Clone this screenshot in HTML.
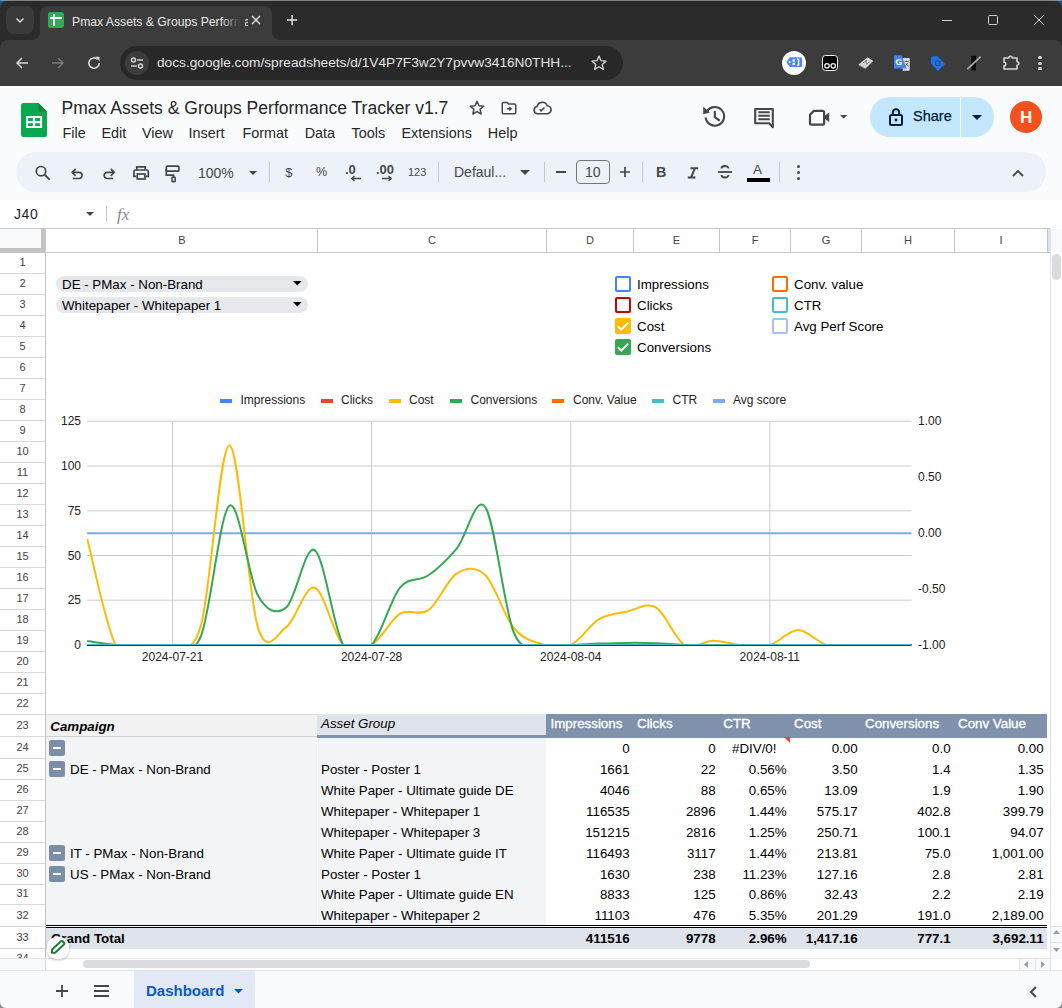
<!DOCTYPE html><html><head><meta charset="utf-8"><style>
*{margin:0;padding:0;box-sizing:border-box}
html,body{width:1062px;height:1008px;overflow:hidden;background:#f9fbfd;font-family:"Liberation Sans", sans-serif}
.abs{position:absolute}
.t{position:absolute;white-space:nowrap;line-height:1}
svg{position:absolute;overflow:visible}
</style></head><body>
<div class="abs" style="left:0;top:0;width:1062px;height:12px;background:#1c4f8a"></div>
<div class="abs" style="left:0;top:0;width:1062px;height:86px;background:#2b2b2b;border-radius:9px 9px 0 0"></div>
<div class="abs" style="left:0;top:0;width:1062px;height:1px;background:#bdbdbd;border-radius:9px 9px 0 0;opacity:.6"></div>
<div class="abs" style="left:6px;top:6px;width:28px;height:28px;background:#3a3a3a;border-radius:8px"></div>
<svg style="left:14px;top:14px" width="12" height="12" viewBox="0 0 12 12"><path d="M2.5 4.5 L6 8 L9.5 4.5" fill="none" stroke="#e3e3e3" stroke-width="1.4"/></svg>
<div class="abs" style="left:40px;top:6px;width:232px;height:40px;background:#3c3c3c;border-radius:8px 8px 0 0"></div>
<svg style="left:32px;top:32px" width="8" height="8"><path d="M0 8 A8 8 0 0 0 8 0 L8 8 Z" fill="#3c3c3c"/></svg>
<svg style="left:272px;top:32px" width="8" height="8"><path d="M0 0 A8 8 0 0 0 8 8 L0 8 Z" fill="#3c3c3c"/></svg>
<div class="abs" style="left:48px;top:12px;width:16px;height:16px;background:#34a853;border-radius:2px"></div>
<div class="abs" style="left:50px;top:17px;width:12px;height:2px;background:#fff"></div>
<div class="abs" style="left:53px;top:14px;width:2px;height:12px;background:#fff"></div>
<div class="t" style="left:72px;top:15.5px;font-size:12.2px;color:#e8e8e8;width:176px;overflow:hidden">Pmax Assets &amp; Groups Performance Tracker</div>
<div class="abs" style="left:221px;top:8px;width:24px;height:28px;background:linear-gradient(90deg,rgba(60,60,60,0),#3c3c3c 80%)"></div>
<svg style="left:251px;top:15px" width="10" height="10"><path d="M1 1L9 9M9 1L1 9" stroke="#e3e3e3" stroke-width="1.4"/></svg>
<svg style="left:287px;top:15px" width="10.5" height="10.5"><path d="M5.1 0V10.2M0 5.1H10.2" stroke="#e3e3e3" stroke-width="1.5"/></svg>
<div class="abs" style="left:942px;top:20px;width:10px;height:1px;background:#d0d0d0"></div>
<div class="abs" style="left:988px;top:15px;width:10px;height:10px;border:1px solid #d0d0d0;border-radius:1.5px"></div>
<svg style="left:1034px;top:15px" width="10" height="10"><path d="M0 0L10 10M10 0L0 10" stroke="#d0d0d0" stroke-width="1"/></svg>
<div class="abs" style="left:0;top:40px;width:1062px;height:46px;background:#3c3c3c;border-radius:8px 8px 0 0"></div>
<svg style="left:14px;top:55px" width="16" height="16"><path d="M14 8H3.2M8 3L3 8L8 13" fill="none" stroke="#d6d6d6" stroke-width="1.5"/></svg>
<svg style="left:50px;top:55px" width="16" height="16"><path d="M2 8H12.8M8 3L13 8L8 13" fill="none" stroke="#7a7a7a" stroke-width="1.5"/></svg>
<svg style="left:86px;top:55px" width="16" height="16"><path d="M13.2 8A5.2 5.2 0 1 1 11.5 4.2" fill="none" stroke="#d6d6d6" stroke-width="1.6"/><path d="M9 1.8L13.5 1.8L13.5 6.3Z" fill="#d6d6d6"/></svg>
<div class="abs" style="left:120px;top:46px;width:503px;height:34px;background:#282828;border-radius:17px"></div>
<div class="abs" style="left:125px;top:51px;width:24px;height:24px;background:#3c3c3c;border-radius:12px"></div>
<svg style="left:129px;top:55px" width="16" height="16"><circle cx="4.5" cy="5" r="2" fill="none" stroke="#d6d6d6" stroke-width="1.4"/><path d="M8 5H14" stroke="#d6d6d6" stroke-width="1.4"/><circle cx="11.5" cy="11" r="2" fill="none" stroke="#d6d6d6" stroke-width="1.4"/><path d="M2 11H8" stroke="#d6d6d6" stroke-width="1.4"/></svg>
<div class="t" style="left:157px;top:56px;font-size:13.7px;color:#e3e3e3">docs.google.com/spreadsheets/d/1V4P7F3w2Y7pvvw3416N0THH...</div>
<svg style="left:590px;top:54px" width="18" height="18" viewBox="0 0 24 24"><path d="M12 2.8l2.7 6.1 6.6.6-5 4.4 1.5 6.5L12 17l-5.8 3.4 1.5-6.5-5-4.4 6.6-.6z" fill="none" stroke="#d6d6d6" stroke-width="1.8" stroke-linejoin="round"/></svg>
<div class="abs" style="left:782px;top:51px;width:24px;height:24px;background:#fff;border-radius:12px"></div>
<svg style="left:0;top:0" width="1062" height="90"><path d="M786.3 62L789.8 57.2H800.5A1.5 1.5 0 0 1 802 58.7V65.5A1.5 1.5 0 0 1 800.5 67H789.8Z" fill="#4f86f7"/><circle cx="789.6" cy="62" r="1" fill="#fff"/><rect x="792.6" y="59.3" width="2.4" height="2.4" fill="#fff"/><rect x="792.6" y="62.8" width="2.4" height="2.4" fill="#fff"/><path d="M797 59.2H798.6V65.2H797" fill="none" stroke="#fff" stroke-width="1.3"/></svg>
<div class="abs" style="left:822px;top:55px;width:16px;height:16px;background:#000;border:1.5px solid #f2f2f2;border-radius:3.5px"></div>
<svg style="left:0;top:0" width="1062" height="90"><circle cx="827" cy="65.8" r="2.2" fill="none" stroke="#f2f2f2" stroke-width="1.3"/><circle cx="833.2" cy="65.8" r="2.2" fill="none" stroke="#f2f2f2" stroke-width="1.3"/></svg>
<svg style="left:0;top:0" width="1062" height="90"><path d="M858.5 64.5L867.5 57.3L873.3 61L865.5 68.4Z" fill="#d4d4d4"/><path d="M858.5 64.5L865.5 68.4L865.6 69.2L858.6 65.4Z" fill="#9a9a9a"/><path d="M863 62.8L867 60.2M865.8 64.6L869.5 61.8M866 60.5L866.3 64" stroke="#7a7a7a" stroke-width="0.9" fill="none"/></svg>
<svg style="left:0;top:0" width="1062" height="90"><path d="M902.6 57.9H908.8A1 1 0 0 1 909.8 58.9V69.7A1 1 0 0 1 908.8 70.7H902.6Z" fill="#dadada"/><path d="M894 55.3H901.5L906.5 68.4H894Z" fill="#4285f4"/><path d="M904.5 61.5H908.5M906.5 60.5V61.5M905 66.5L908 62.5M906 63.5L908.5 66.5" stroke="#5a5a5a" stroke-width="0.9" fill="none"/></svg>
<div class="t" style="left:895.5px;top:57.5px;font-size:8.5px;font-weight:bold;color:#fff">G</div>
<svg style="left:0;top:0" width="1062" height="90"><path d="M931 58.3A2 2 0 0 1 933 56.3H937.3L945 64L938 71L931 63.6Z" fill="#1a73e8"/><circle cx="937.8" cy="63.2" r="2.3" fill="#1a73e8" stroke="#2b4f80" stroke-width="1.2"/></svg>
<svg style="left:0;top:0" width="1062" height="90"><rect x="971.4" y="55.9" width="4.6" height="14.5" fill="#080808"/><path d="M967.4 69.1L980.6 56.6" stroke="#a8a8a8" stroke-width="1.8"/></svg>
<svg style="left:1001px;top:53px" width="20" height="20" viewBox="0 0 20 20"><path d="M3 5H7.7A1.8 1.8 0 0 1 11.3 5H16V8.7A1.8 1.8 0 0 1 16 12.3V16H3V12.8A1.8 1.8 0 0 0 3 9.2Z" fill="none" stroke="#d6d6d6" stroke-width="1.6" stroke-linejoin="round"/></svg>
<div class="abs" style="left:1038.4px;top:55.9px;width:3.2px;height:3.2px;background:#d6d6d6;border-radius:2px"></div>
<div class="abs" style="left:1038.4px;top:61.6px;width:3.2px;height:3.2px;background:#d6d6d6;border-radius:2px"></div>
<div class="abs" style="left:1038.4px;top:67.30000000000001px;width:3.2px;height:3.2px;background:#d6d6d6;border-radius:2px"></div>
<svg style="left:21px;top:103px" width="26" height="34" viewBox="0 0 26 34"><path d="M2.5 0H17.5L26 8.5V31.5A2.5 2.5 0 0 1 23.5 34H2.5A2.5 2.5 0 0 1 0 31.5V2.5A2.5 2.5 0 0 1 2.5 0Z" fill="#06a94d"/><path d="M17.5 0L26 8.5H17.5Z" fill="#16843a"/><path d="M5.1 13.1H21.1V25.1H5.1Z M7.1 15.1V18.1H11.9V15.1Z M14.1 15.1V18.1H19.1V15.1Z M7.1 20.2V22.9H11.9V20.2Z M14.1 20.2V22.9H19.1V20.2Z" fill="#fff" fill-rule="evenodd"/></svg>
<div class="t" style="left:61.5px;top:100px;font-size:17.55px;color:#262626">Pmax Assets &amp; Groups Performance Tracker v1.7</div>
<svg style="left:468px;top:99px" width="18" height="18" viewBox="0 0 24 24"><path d="M12 3.2l2.6 5.8 6.3.6-4.8 4.2 1.4 6.2L12 16.8l-5.5 3.2 1.4-6.2L3.1 9.6l6.3-.6z" fill="none" stroke="#444746" stroke-width="2" stroke-linejoin="round"/></svg>
<svg style="left:500px;top:99px" width="18" height="18" viewBox="0 0 24 24"><path d="M3 6A1.5 1.5 0 0 1 4.5 4.5H9.5L11.5 6.5H19.5A1.5 1.5 0 0 1 21 8V18A1.5 1.5 0 0 1 19.5 19.5H4.5A1.5 1.5 0 0 1 3 18Z" fill="none" stroke="#444746" stroke-width="2"/><path d="M9 13H15M12.5 10.5L15 13L12.5 15.5" fill="none" stroke="#444746" stroke-width="1.8"/></svg>
<svg style="left:532px;top:99px" width="20" height="18" viewBox="0 0 24 22"><path d="M6.5 18A4.5 4.5 0 0 1 6 9.1 6.5 6.5 0 0 1 18.4 8.2 4.9 4.9 0 0 1 18 18Z" fill="none" stroke="#444746" stroke-width="2"/><path d="M9 12.5L11 14.5L15 10.5" fill="none" stroke="#444746" stroke-width="1.8"/></svg>
<div class="t" style="left:62.5px;top:125.7px;font-size:14.4px;color:#262626">File</div>
<div class="t" style="left:101.5px;top:125.7px;font-size:14.4px;color:#262626">Edit</div>
<div class="t" style="left:142px;top:125.7px;font-size:14.4px;color:#262626">View</div>
<div class="t" style="left:188.5px;top:125.7px;font-size:14.4px;color:#262626">Insert</div>
<div class="t" style="left:242.5px;top:125.7px;font-size:14.4px;color:#262626">Format</div>
<div class="t" style="left:304.7px;top:125.7px;font-size:14.4px;color:#262626">Data</div>
<div class="t" style="left:351.5px;top:125.7px;font-size:14.4px;color:#262626">Tools</div>
<div class="t" style="left:401.5px;top:125.7px;font-size:14.4px;color:#262626">Extensions</div>
<div class="t" style="left:487.8px;top:125.7px;font-size:14.4px;color:#262626">Help</div>
<svg style="left:0;top:0" width="1062" height="200"><path d="M706.6 112A9.3 9.3 0 1 1 705.6 117.5" fill="none" stroke="#444746" stroke-width="2.1"/><path d="M703.2 106.8L710 112.6L703.2 114.2Z" fill="#444746"/><path d="M714.8 111V117.2L719.8 120.6" fill="none" stroke="#444746" stroke-width="2.1"/></svg>
<svg style="left:0;top:0" width="1062" height="200"><path d="M755.2 109H772.8V127.2L769 123.3H755.2Z" fill="none" stroke="#444746" stroke-width="2.1" stroke-linejoin="round"/><path d="M758.3 112.3H769.8M758.3 115.8H769.8M758.3 119.3H769.8" stroke="#444746" stroke-width="2"/></svg>
<svg style="left:0;top:0" width="1062" height="200"><path d="M813.8 110.9H822.8A1.3 1.3 0 0 1 824.1 112.2V123.4A1.3 1.3 0 0 1 822.8 124.7H811.3A1.3 1.3 0 0 1 810 123.4V114.7Z" fill="none" stroke="#444746" stroke-width="2.2" stroke-linejoin="round"/><path d="M824 116.3L829.2 112.6V122L824 118.3Z" fill="#444746"/></svg>
<svg style="left:839.6px;top:115px" width="8" height="4"><path d="M0 0H7.4L3.7 3.5Z" fill="#444746"/></svg>
<div class="abs" style="left:870px;top:97px;width:124px;height:40px;background:#c2e7ff;border-radius:20px"></div>
<div class="abs" style="left:960px;top:97px;width:1px;height:40px;background:#f9fbfd"></div>
<svg style="left:888px;top:107px" width="16" height="20" viewBox="0 0 16 20"><rect x="2" y="8" width="12" height="10" rx="1.5" fill="none" stroke="#001d35" stroke-width="2"/><path d="M4.8 8V5.5A3.2 3.2 0 0 1 11.2 5.5V8" fill="none" stroke="#001d35" stroke-width="2"/><circle cx="8" cy="13" r="1.4" fill="#001d35"/></svg>
<div class="t" style="left:913px;top:109px;font-size:14.5px;color:#001d35;-webkit-text-stroke:0.25px #001d35">Share</div>
<svg style="left:972px;top:115px" width="10" height="6"><path d="M0 0H10L5 5Z" fill="#001d35"/></svg>
<div class="abs" style="left:1010px;top:101px;width:32px;height:32px;background:#f4511e;border-radius:16px"></div>
<div class="t" style="left:1020px;top:109px;font-size:17px;color:#fff;font-weight:bold">H</div>
<div class="abs" style="left:16px;top:152px;width:1030px;height:40px;background:#edf2fa;border-radius:20px"></div>
<svg style="left:0;top:0" width="300" height="200"><circle cx="41" cy="171.2" r="4.7" fill="none" stroke="#444746" stroke-width="1.7"/><path d="M44.6 174.8L49.6 179.6" stroke="#444746" stroke-width="2"/></svg>
<svg style="left:0;top:0" width="300" height="200"><path d="M73 172.3H79A3.1 3.1 0 0 1 79 178.5H73" fill="none" stroke="#444746" stroke-width="1.7"/><path d="M75.6 168.8L72.2 172.3L75.6 175.8" fill="none" stroke="#444746" stroke-width="1.7"/></svg>
<svg style="left:0;top:0" width="300" height="200"><path d="M114 172.3H107.3A3.1 3.1 0 0 0 107.3 178.5H113" fill="none" stroke="#444746" stroke-width="1.7"/><path d="M110.8 168.8L114.2 172.3L110.8 175.8" fill="none" stroke="#444746" stroke-width="1.7"/></svg>
<svg style="left:0;top:0" width="300" height="200"><path d="M136.8 170V166.8H145.2V170" fill="none" stroke="#444746" stroke-width="1.7"/><path d="M136.3 176.3H134V171.5A1.5 1.5 0 0 1 135.5 170H146.8A1.5 1.5 0 0 1 148.3 171.5V176.3H146" fill="none" stroke="#444746" stroke-width="1.7"/><rect x="137.3" y="174" width="7.6" height="5" fill="none" stroke="#444746" stroke-width="1.7"/></svg>
<svg style="left:0;top:0" width="300" height="200"><rect x="166.3" y="166.2" width="12.6" height="5" rx="1" fill="none" stroke="#444746" stroke-width="1.7"/><path d="M166.3 169V175.2H173.5V177.5" fill="none" stroke="#444746" stroke-width="1.7"/><rect x="172" y="177.3" width="3.2" height="4.3" rx=".6" fill="none" stroke="#444746" stroke-width="1.6"/></svg>
<div class="t" style="left:198px;top:166px;font-size:14px;color:#444746">100%</div>
<svg style="left:248.5px;top:170.5px" width="8" height="5"><path d="M0 0H8L4 4Z" fill="#444746"/></svg>
<div class="abs" style="left:269px;top:162px;width:1px;height:20px;background:#c7c7c7"></div>
<div class="abs" style="left:438px;top:162px;width:1px;height:20px;background:#c7c7c7"></div>
<div class="abs" style="left:544px;top:162px;width:1px;height:20px;background:#c7c7c7"></div>
<div class="abs" style="left:642px;top:162px;width:1px;height:20px;background:#c7c7c7"></div>
<div class="abs" style="left:779px;top:162px;width:1px;height:20px;background:#c7c7c7"></div>
<div class="t" style="left:285.3px;top:165.5px;font-size:13px;color:#444746">$</div>
<div class="t" style="left:316px;top:166px;font-size:12.5px;color:#444746">%</div>
<div class="t" style="left:345px;top:163px;font-size:13px;color:#444746;font-weight:bold">.0</div>
<svg style="left:350px;top:175px" width="12" height="7"><path d="M11 3.5H2M4.5 1L1.8 3.5L4.5 6" fill="none" stroke="#444746" stroke-width="1.4"/></svg>
<div class="t" style="left:376px;top:163px;font-size:13px;color:#444746;font-weight:bold">.00</div>
<svg style="left:381px;top:175px" width="12" height="7"><path d="M1 3.5H10M7.5 1L10.2 3.5L7.5 6" fill="none" stroke="#444746" stroke-width="1.4"/></svg>
<div class="t" style="left:408px;top:167px;font-size:11px;color:#444746">123</div>
<div class="t" style="left:454px;top:165px;font-size:14px;color:#444746">Defaul...</div>
<svg style="left:520px;top:170px" width="10" height="5"><path d="M0 0H10L5 5Z" fill="#444746"/></svg>
<div class="abs" style="left:556px;top:171.2px;width:10px;height:1.7px;background:#444746"></div>
<div class="abs" style="left:576px;top:160px;width:34px;height:24px;border:1px solid #747775;border-radius:4px"></div>
<div class="t" style="left:585px;top:165px;font-size:14px;color:#444746">10</div>
<svg style="left:620px;top:167px" width="10" height="10"><path d="M5 0V10M0 5H10" stroke="#444746" stroke-width="1.7"/></svg>
<div class="t" style="left:656px;top:165px;font-size:14.3px;color:#444746;font-weight:bold">B</div>
<svg style="left:0;top:0" width="800" height="200"><path d="M690.5 168.2H698.2M687.8 177.5H695.5M695 168.2L691 177.5" fill="none" stroke="#444746" stroke-width="1.9"/></svg>
<svg style="left:716px;top:163px" width="18" height="18" viewBox="0 0 18 18"><path d="M2 9H16" stroke="#444746" stroke-width="1.8"/><path d="M12.5 5.5A3.5 2.5 0 0 0 5.5 5.5M5.5 12A3.5 2.5 0 0 0 12.5 12" fill="none" stroke="#444746" stroke-width="1.8"/></svg>
<div class="t" style="left:753px;top:163px;font-size:13.5px;color:#444746">A</div>
<div class="abs" style="left:747px;top:178px;width:23px;height:4px;background:#000"></div>
<div class="abs" style="left:797px;top:165px;width:3px;height:3px;background:#444746;border-radius:2px"></div>
<div class="abs" style="left:797px;top:171px;width:3px;height:3px;background:#444746;border-radius:2px"></div>
<div class="abs" style="left:797px;top:177px;width:3px;height:3px;background:#444746;border-radius:2px"></div>
<svg style="left:1012px;top:169px" width="12" height="8"><path d="M1 7L6 2L11 7" fill="none" stroke="#444746" stroke-width="1.8"/></svg>
<div class="abs" style="left:0;top:200px;width:1062px;height:28px;background:#fff"></div>
<div class="t" style="left:14px;top:206.6px;font-size:14px;letter-spacing:.6px;color:#1f1f1f">J40</div>
<svg style="left:86px;top:212px" width="8" height="4"><path d="M0 0H8L4 4Z" fill="#444746"/></svg>
<div class="abs" style="left:106px;top:206px;width:1px;height:16px;background:#c7c7c7"></div>
<div class="t" style="left:117px;top:205.5px;font-size:17px;color:#8a8a8a;font-style:italic;font-family:'Liberation Serif',serif">fx</div>
<div class="abs" style="left:0;top:228px;width:1062px;height:731px;background:#fff"></div>
<div class="abs" style="left:0;top:228px;width:1050px;height:1px;background:#c4c7c5"></div>
<div class="abs" style="left:0;top:229px;width:41px;height:19px;background:#f8f9fa"></div>
<div class="abs" style="left:41px;top:229px;width:5px;height:24px;background:#c4c4c4"></div>
<div class="abs" style="left:0;top:248px;width:46px;height:5px;background:#c4c4c4"></div>
<div class="abs" style="left:46px;top:252px;width:1004px;height:1px;background:#c4c7c5"></div>
<div class="abs" style="left:317px;top:229px;width:1px;height:23px;background:#c4c7c5"></div>
<div class="t" style="left:46px;width:271px;text-align:center;top:235px;font-size:11px;color:#444;padding-left:1px">B</div>
<div class="abs" style="left:546px;top:229px;width:1px;height:23px;background:#c4c7c5"></div>
<div class="t" style="left:317px;width:229px;text-align:center;top:235px;font-size:11px;color:#444;padding-left:1px">C</div>
<div class="abs" style="left:633px;top:229px;width:1px;height:23px;background:#c4c7c5"></div>
<div class="t" style="left:546px;width:87px;text-align:center;top:235px;font-size:11px;color:#444;padding-left:1px">D</div>
<div class="abs" style="left:719px;top:229px;width:1px;height:23px;background:#c4c7c5"></div>
<div class="t" style="left:633px;width:86px;text-align:center;top:235px;font-size:11px;color:#444;padding-left:1px">E</div>
<div class="abs" style="left:790px;top:229px;width:1px;height:23px;background:#c4c7c5"></div>
<div class="t" style="left:719px;width:71px;text-align:center;top:235px;font-size:11px;color:#444;padding-left:1px">F</div>
<div class="abs" style="left:861px;top:229px;width:1px;height:23px;background:#c4c7c5"></div>
<div class="t" style="left:790px;width:71px;text-align:center;top:235px;font-size:11px;color:#444;padding-left:1px">G</div>
<div class="abs" style="left:954px;top:229px;width:1px;height:23px;background:#c4c7c5"></div>
<div class="t" style="left:861px;width:93px;text-align:center;top:235px;font-size:11px;color:#444;padding-left:1px">H</div>
<div class="abs" style="left:1047px;top:229px;width:1px;height:23px;background:#c4c7c5"></div>
<div class="t" style="left:954px;width:93px;text-align:center;top:235px;font-size:11px;color:#444;padding-left:1px">I</div>
<div class="abs" style="left:1048px;top:229px;width:2px;height:23px;background:#d3e3fd"></div>
<div class="abs" style="left:1050px;top:229px;width:12px;height:730px;background:#fff;border-left:1px solid #e3e3e3"></div>
<div class="abs" style="left:1051px;top:229px;width:11px;height:23px;background:#f8f9fa"></div>
<div class="abs" style="left:1052px;top:254px;width:9px;height:26px;background:#dadce0;border-radius:5px"></div>
<div class="abs" style="left:45px;top:253px;width:1px;height:706px;background:#c4c4c4"></div>
<div class="abs" style="left:0;top:273px;width:45px;height:1px;background:#d9d9d9"></div>
<div class="t" style="left:0;width:45px;text-align:center;top:257px;font-size:11px;color:#444">1</div>
<div class="abs" style="left:0;top:294px;width:45px;height:1px;background:#d9d9d9"></div>
<div class="t" style="left:0;width:45px;text-align:center;top:278px;font-size:11px;color:#444">2</div>
<div class="abs" style="left:0;top:315px;width:45px;height:1px;background:#d9d9d9"></div>
<div class="t" style="left:0;width:45px;text-align:center;top:299px;font-size:11px;color:#444">3</div>
<div class="abs" style="left:0;top:336px;width:45px;height:1px;background:#d9d9d9"></div>
<div class="t" style="left:0;width:45px;text-align:center;top:320px;font-size:11px;color:#444">4</div>
<div class="abs" style="left:0;top:357px;width:45px;height:1px;background:#d9d9d9"></div>
<div class="t" style="left:0;width:45px;text-align:center;top:341px;font-size:11px;color:#444">5</div>
<div class="abs" style="left:0;top:378px;width:45px;height:1px;background:#d9d9d9"></div>
<div class="t" style="left:0;width:45px;text-align:center;top:362px;font-size:11px;color:#444">6</div>
<div class="abs" style="left:0;top:399px;width:45px;height:1px;background:#d9d9d9"></div>
<div class="t" style="left:0;width:45px;text-align:center;top:383px;font-size:11px;color:#444">7</div>
<div class="abs" style="left:0;top:420px;width:45px;height:1px;background:#d9d9d9"></div>
<div class="t" style="left:0;width:45px;text-align:center;top:404px;font-size:11px;color:#444">8</div>
<div class="abs" style="left:0;top:441px;width:45px;height:1px;background:#d9d9d9"></div>
<div class="t" style="left:0;width:45px;text-align:center;top:425px;font-size:11px;color:#444">9</div>
<div class="abs" style="left:0;top:462px;width:45px;height:1px;background:#d9d9d9"></div>
<div class="t" style="left:0;width:45px;text-align:center;top:446px;font-size:11px;color:#444">10</div>
<div class="abs" style="left:0;top:483px;width:45px;height:1px;background:#d9d9d9"></div>
<div class="t" style="left:0;width:45px;text-align:center;top:467px;font-size:11px;color:#444">11</div>
<div class="abs" style="left:0;top:504px;width:45px;height:1px;background:#d9d9d9"></div>
<div class="t" style="left:0;width:45px;text-align:center;top:488px;font-size:11px;color:#444">12</div>
<div class="abs" style="left:0;top:525px;width:45px;height:1px;background:#d9d9d9"></div>
<div class="t" style="left:0;width:45px;text-align:center;top:509px;font-size:11px;color:#444">13</div>
<div class="abs" style="left:0;top:546px;width:45px;height:1px;background:#d9d9d9"></div>
<div class="t" style="left:0;width:45px;text-align:center;top:530px;font-size:11px;color:#444">14</div>
<div class="abs" style="left:0;top:567px;width:45px;height:1px;background:#d9d9d9"></div>
<div class="t" style="left:0;width:45px;text-align:center;top:551px;font-size:11px;color:#444">15</div>
<div class="abs" style="left:0;top:588px;width:45px;height:1px;background:#d9d9d9"></div>
<div class="t" style="left:0;width:45px;text-align:center;top:572px;font-size:11px;color:#444">16</div>
<div class="abs" style="left:0;top:609px;width:45px;height:1px;background:#d9d9d9"></div>
<div class="t" style="left:0;width:45px;text-align:center;top:593px;font-size:11px;color:#444">17</div>
<div class="abs" style="left:0;top:630px;width:45px;height:1px;background:#d9d9d9"></div>
<div class="t" style="left:0;width:45px;text-align:center;top:614px;font-size:11px;color:#444">18</div>
<div class="abs" style="left:0;top:651px;width:45px;height:1px;background:#d9d9d9"></div>
<div class="t" style="left:0;width:45px;text-align:center;top:635px;font-size:11px;color:#444">19</div>
<div class="abs" style="left:0;top:672px;width:45px;height:1px;background:#d9d9d9"></div>
<div class="t" style="left:0;width:45px;text-align:center;top:656px;font-size:11px;color:#444">20</div>
<div class="abs" style="left:0;top:693px;width:45px;height:1px;background:#d9d9d9"></div>
<div class="t" style="left:0;width:45px;text-align:center;top:677px;font-size:11px;color:#444">21</div>
<div class="abs" style="left:0;top:714px;width:45px;height:1px;background:#d9d9d9"></div>
<div class="t" style="left:0;width:45px;text-align:center;top:698px;font-size:11px;color:#444">22</div>
<div class="abs" style="left:0;top:736px;width:45px;height:1px;background:#d9d9d9"></div>
<div class="t" style="left:0;width:45px;text-align:center;top:720px;font-size:11px;color:#444">23</div>
<div class="abs" style="left:0;top:758px;width:45px;height:1px;background:#d9d9d9"></div>
<div class="t" style="left:0;width:45px;text-align:center;top:742px;font-size:11px;color:#444">24</div>
<div class="abs" style="left:0;top:779px;width:45px;height:1px;background:#d9d9d9"></div>
<div class="t" style="left:0;width:45px;text-align:center;top:763px;font-size:11px;color:#444">25</div>
<div class="abs" style="left:0;top:800px;width:45px;height:1px;background:#d9d9d9"></div>
<div class="t" style="left:0;width:45px;text-align:center;top:784px;font-size:11px;color:#444">26</div>
<div class="abs" style="left:0;top:821px;width:45px;height:1px;background:#d9d9d9"></div>
<div class="t" style="left:0;width:45px;text-align:center;top:805px;font-size:11px;color:#444">27</div>
<div class="abs" style="left:0;top:842px;width:45px;height:1px;background:#d9d9d9"></div>
<div class="t" style="left:0;width:45px;text-align:center;top:826px;font-size:11px;color:#444">28</div>
<div class="abs" style="left:0;top:863px;width:45px;height:1px;background:#d9d9d9"></div>
<div class="t" style="left:0;width:45px;text-align:center;top:847px;font-size:11px;color:#444">29</div>
<div class="abs" style="left:0;top:884px;width:45px;height:1px;background:#d9d9d9"></div>
<div class="t" style="left:0;width:45px;text-align:center;top:868px;font-size:11px;color:#444">30</div>
<div class="abs" style="left:0;top:904px;width:45px;height:1px;background:#d9d9d9"></div>
<div class="t" style="left:0;width:45px;text-align:center;top:888px;font-size:11px;color:#444">31</div>
<div class="abs" style="left:0;top:926px;width:45px;height:1px;background:#d9d9d9"></div>
<div class="t" style="left:0;width:45px;text-align:center;top:910px;font-size:11px;color:#444">32</div>
<div class="abs" style="left:0;top:948px;width:45px;height:1px;background:#d9d9d9"></div>
<div class="t" style="left:0;width:45px;text-align:center;top:932px;font-size:11px;color:#444">33</div>
<div class="abs" style="left:0;top:969px;width:45px;height:1px;background:#d9d9d9"></div>
<div class="t" style="left:0;width:45px;text-align:center;top:953px;font-size:11px;color:#444">34</div>
<div class="abs" style="left:56px;top:276px;width:252px;height:16px;background:#e6e8ec;border-radius:8px"></div>
<div class="t" style="left:62px;top:278px;font-size:13.33px;color:#000">DE - PMax - Non-Brand</div>
<svg style="left:293.1px;top:281.2px" width="9" height="5"><path d="M0 0H8.7L4.35 4.5Z" fill="#000"/></svg>
<div class="abs" style="left:56px;top:297px;width:252px;height:16px;background:#e6e8ec;border-radius:8px"></div>
<div class="t" style="left:62px;top:299px;font-size:13.33px;color:#000">Whitepaper - Whitepaper 1</div>
<svg style="left:293.1px;top:302.2px" width="9" height="5"><path d="M0 0H8.7L4.35 4.5Z" fill="#000"/></svg>
<div class="abs" style="left:615px;top:276px;width:16px;height:16px;border:2px solid #4285f4;border-radius:2px"></div>
<div class="t" style="left:637px;top:278px;font-size:13.33px;color:#000">Impressions</div>
<div class="abs" style="left:615px;top:297px;width:16px;height:16px;border:2px solid #cc0000;border-radius:2px"></div>
<div class="t" style="left:637px;top:299px;font-size:13.33px;color:#000">Clicks</div>
<div class="abs" style="left:615px;top:318px;width:16px;height:16px;background:#fbbc04;border-radius:2px"></div>
<svg style="left:615px;top:318px" width="16" height="16"><path d="M2.8 8.3L6.2 11.6L13.2 4.6" fill="none" stroke="#fff" stroke-width="2"/></svg>
<div class="t" style="left:637px;top:320px;font-size:13.33px;color:#000">Cost</div>
<div class="abs" style="left:615px;top:339px;width:16px;height:16px;background:#34a853;border-radius:2px"></div>
<svg style="left:615px;top:339px" width="16" height="16"><path d="M2.8 8.3L6.2 11.6L13.2 4.6" fill="none" stroke="#fff" stroke-width="2"/></svg>
<div class="t" style="left:637px;top:341px;font-size:13.33px;color:#000">Conversions</div>
<div class="abs" style="left:772px;top:276px;width:16px;height:16px;border:2px solid #ff6d01;border-radius:2px"></div>
<div class="t" style="left:794px;top:278px;font-size:13.33px;color:#000">Conv. value</div>
<div class="abs" style="left:772px;top:297px;width:16px;height:16px;border:2px solid #46bdc6;border-radius:2px"></div>
<div class="t" style="left:794px;top:299px;font-size:13.33px;color:#000">CTR</div>
<div class="abs" style="left:772px;top:318px;width:16px;height:16px;border:2px solid #a4c2f4;border-radius:2px"></div>
<div class="t" style="left:794px;top:320px;font-size:13.33px;color:#000">Avg Perf Score</div>
<div class="abs" style="left:220px;top:399px;width:12px;height:4px;background:#4285f4"></div>
<div class="t" style="left:240.5px;top:394px;font-size:12px;color:#222">Impressions</div>
<div class="abs" style="left:321px;top:399px;width:12px;height:4px;background:#ea4335"></div>
<div class="t" style="left:341px;top:394px;font-size:12px;color:#222">Clicks</div>
<div class="abs" style="left:389px;top:399px;width:12px;height:4px;background:#fbbc04"></div>
<div class="t" style="left:409px;top:394px;font-size:12px;color:#222">Cost</div>
<div class="abs" style="left:450px;top:399px;width:12px;height:4px;background:#34a853"></div>
<div class="t" style="left:470.5px;top:394px;font-size:12px;color:#222">Conversions</div>
<div class="abs" style="left:552px;top:399px;width:12px;height:4px;background:#ff6d01"></div>
<div class="t" style="left:573px;top:394px;font-size:12px;color:#222">Conv. Value</div>
<div class="abs" style="left:652px;top:399px;width:12px;height:4px;background:#46bdc6"></div>
<div class="t" style="left:672.5px;top:394px;font-size:12px;color:#222">CTR</div>
<div class="abs" style="left:713px;top:399px;width:12px;height:4px;background:#7baaf7"></div>
<div class="t" style="left:733px;top:394px;font-size:12px;color:#222">Avg score</div>
<svg style="left:0;top:0" width="1062" height="1008"><defs><clipPath id="pc"><rect x="87" y="380" width="825" height="265"/></clipPath></defs><path d="M87 645.0H911.5" stroke="#cccccc" stroke-width="1"/><path d="M87 600.2H911.5" stroke="#cccccc" stroke-width="1"/><path d="M87 555.5H911.5" stroke="#cccccc" stroke-width="1"/><path d="M87 510.8H911.5" stroke="#cccccc" stroke-width="1"/><path d="M87 466.0H911.5" stroke="#cccccc" stroke-width="1"/><path d="M87 421.2H911.5" stroke="#cccccc" stroke-width="1"/><path d="M172.5 421.3V645" stroke="#cccccc" stroke-width="1"/><path d="M371.6 421.3V645" stroke="#cccccc" stroke-width="1"/><path d="M570.7 421.3V645" stroke="#cccccc" stroke-width="1"/><path d="M769.8 421.3V645" stroke="#cccccc" stroke-width="1"/><path d="M87 533.3H911.5" stroke="#7baaf7" stroke-width="2"/><path clip-path="url(#pc)" d="M87.2 538.7 C91.9 556.4 106.2 627.3 115.6 645.0 C125.1 662.7 134.6 645.0 144.1 645.0 C153.6 645.0 163.0 648.3 172.5 645.0 C182.0 641.7 191.5 658.6 201.0 625.3 C210.4 592.0 219.9 444.9 229.4 445.2 C238.9 445.5 248.4 596.8 257.8 627.1 C267.3 657.4 276.8 633.7 286.3 627.1 C295.8 620.5 305.2 584.7 314.7 587.7 C324.2 590.7 333.7 635.5 343.2 645.0 C352.6 654.5 362.1 650.2 371.6 645.0 C381.1 639.8 390.6 619.5 400.0 613.7 C409.5 607.9 419.0 616.8 428.5 610.1 C438.0 603.4 447.4 579.2 456.9 573.4 C466.4 567.6 475.9 566.1 485.4 575.2 C494.8 584.3 504.3 616.5 513.8 628.0 C523.3 639.5 532.8 641.3 542.2 644.1 C551.7 646.9 561.2 649.1 570.7 645.0 C580.2 640.9 589.6 624.8 599.1 619.2 C608.6 613.6 618.1 613.5 627.6 611.5 C637.0 609.6 646.5 601.8 656.0 607.4 C665.5 613.0 675.0 639.5 684.4 645.0 C693.9 650.5 703.4 640.7 712.9 640.7 C722.4 640.7 731.8 644.3 741.3 645.0 C750.8 645.7 760.3 647.5 769.8 645.0 C779.2 642.5 788.7 630.1 798.2 630.1 C807.7 630.1 817.2 642.5 826.6 645.0 C836.1 647.5 845.6 645.0 855.1 645.0 C864.6 645.0 874.0 645.0 883.5 645.0 C893.0 645.0 907.2 645.0 912.0 645.0" fill="none" stroke="#fbbc04" stroke-width="2"/><path clip-path="url(#pc)" d="M87.2 641.1 C91.9 641.7 106.2 644.3 115.6 645.0 C125.1 645.7 134.6 645.0 144.1 645.0 C153.6 645.0 163.0 646.5 172.5 645.0 C182.0 643.5 191.5 659.3 201.0 636.0 C210.4 612.8 219.9 512.5 229.4 505.7 C238.9 498.9 248.4 578.3 257.8 595.2 C267.3 612.2 276.8 614.9 286.3 607.4 C295.8 599.9 305.2 543.9 314.7 550.1 C324.2 556.4 333.7 629.2 343.2 645.0 C352.6 660.8 362.1 654.5 371.6 645.0 C381.1 635.5 390.6 599.4 400.0 587.7 C409.5 576.1 419.0 581.8 428.5 575.2 C438.0 568.6 447.4 559.7 456.9 548.3 C466.4 537.0 475.9 493.1 485.4 507.2 C494.8 521.2 504.3 609.5 513.8 632.5 C523.3 655.4 532.8 642.9 542.2 645.0 C551.7 647.1 561.2 645.2 570.7 645.0 C580.2 644.8 589.6 643.9 599.1 643.6 C608.6 643.2 618.1 642.9 627.6 642.9 C637.0 642.8 646.5 642.9 656.0 643.2 C665.5 643.6 675.0 644.7 684.4 645.0 C693.9 645.3 703.4 645.0 712.9 645.0 C722.4 645.0 731.8 645.0 741.3 645.0 C750.8 645.0 760.3 645.0 769.8 645.0 C779.2 645.0 788.7 645.0 798.2 645.0 C807.7 645.0 817.2 645.0 826.6 645.0 C836.1 645.0 845.6 645.0 855.1 645.0 C864.6 645.0 874.0 645.0 883.5 645.0 C893.0 645.0 907.2 645.0 912.0 645.0" fill="none" stroke="#34a853" stroke-width="2"/><path d="M87 644.5H911.5" stroke="#46bdc6" stroke-width="1"/><path d="M87 645.5H911.5" stroke="#333" stroke-width="1.2"/></svg>
<div class="t" style="left:31px;width:50px;text-align:right;top:639.0px;font-size:12px;color:#222">0</div>
<div class="t" style="left:31px;width:50px;text-align:right;top:594.2px;font-size:12px;color:#222">25</div>
<div class="t" style="left:31px;width:50px;text-align:right;top:549.5px;font-size:12px;color:#222">50</div>
<div class="t" style="left:31px;width:50px;text-align:right;top:504.8px;font-size:12px;color:#222">75</div>
<div class="t" style="left:31px;width:50px;text-align:right;top:460.0px;font-size:12px;color:#222">100</div>
<div class="t" style="left:31px;width:50px;text-align:right;top:415.2px;font-size:12px;color:#222">125</div>
<div class="t" style="left:918px;top:414.9px;font-size:12px;color:#222">1.00</div>
<div class="t" style="left:918px;top:470.8px;font-size:12px;color:#222">0.50</div>
<div class="t" style="left:918px;top:526.8px;font-size:12px;color:#222">0.00</div>
<div class="t" style="left:918px;top:582.7px;font-size:12px;color:#222">-0.50</div>
<div class="t" style="left:918px;top:638.6px;font-size:12px;color:#222">-1.00</div>
<div class="t" style="left:132.5px;width:80px;text-align:center;top:651px;font-size:12px;color:#222">2024-07-21</div>
<div class="t" style="left:331.6px;width:80px;text-align:center;top:651px;font-size:12px;color:#222">2024-07-28</div>
<div class="t" style="left:530.7px;width:80px;text-align:center;top:651px;font-size:12px;color:#222">2024-08-04</div>
<div class="t" style="left:729.8px;width:80px;text-align:center;top:651px;font-size:12px;color:#222">2024-08-11</div>
<div class="abs" style="left:46px;top:714px;width:271px;height:1px;background:#d9d9d9"></div>
<div class="abs" style="left:46px;top:715px;width:271px;height:21px;background:#f2f2f2"></div>
<div class="abs" style="left:46px;top:736px;width:271px;height:1px;background:#d0d0d0"></div>
<div class="abs" style="left:317px;top:714px;width:229px;height:21px;background:#dfe3eb"></div>
<div class="abs" style="left:317px;top:735px;width:229px;height:3px;background:#7f91ab"></div>
<div class="abs" style="left:546px;top:714px;width:501px;height:24px;background:#7f91ab"></div>
<div class="t" style="left:50.3px;top:720px;font-size:13.33px;font-weight:bold;font-style:italic;color:#000">Campaign</div>
<div class="t" style="left:321px;top:717px;font-size:13.33px;font-style:italic;color:#000">Asset Group</div>
<div class="t" style="left:550.5px;top:717.2px;font-size:13.33px;color:#fff;-webkit-text-stroke:0.35px #fff">Impressions</div>
<div class="t" style="left:637px;top:717.2px;font-size:13.33px;color:#fff;-webkit-text-stroke:0.35px #fff">Clicks</div>
<div class="t" style="left:723.3px;top:717.2px;font-size:13.33px;color:#fff;-webkit-text-stroke:0.35px #fff">CTR</div>
<div class="t" style="left:794px;top:717.2px;font-size:13.33px;color:#fff;-webkit-text-stroke:0.35px #fff">Cost</div>
<div class="t" style="left:865px;top:717.2px;font-size:13.33px;color:#fff;-webkit-text-stroke:0.35px #fff">Conversions</div>
<div class="t" style="left:958px;top:717.2px;font-size:13.33px;color:#fff;-webkit-text-stroke:0.35px #fff">Conv Value</div>
<div class="abs" style="left:46px;top:737px;width:271px;height:188px;background:#f3f4f6"></div>
<div class="abs" style="left:317px;top:738px;width:229px;height:187px;background:#f3f4f6"></div>
<div class="abs" style="left:317px;top:738px;width:1px;height:187px;background:#fff"></div>
<div class="abs" style="left:46px;top:925px;width:1001px;height:1px;background:#000"></div>
<div class="abs" style="left:46px;top:926px;width:1001px;height:1px;background:#fff"></div>
<div class="abs" style="left:46px;top:927px;width:1001px;height:1px;background:#000"></div>
<div class="abs" style="left:46px;top:928px;width:1001px;height:21px;background:#dfe3eb"></div>
<div class="t" style="left:51px;top:932px;font-size:13.33px;font-weight:bold;color:#000">Grand Total</div>
<div class="abs" style="left:49px;top:740px;width:16px;height:16px;background:#7a8ea8;border-radius:2px"></div>
<div class="abs" style="left:53px;top:747px;width:8px;height:2px;background:#fff"></div>
<div class="t" style="right:432.4px;top:741.7px;font-size:13.33px;color:#000;text-align:right">0</div>
<div class="t" style="right:346.4px;top:741.7px;font-size:13.33px;color:#000;text-align:right">0</div>
<div class="t" style="left:732px;top:741.7px;font-size:13.33px;color:#000">#DIV/0!</div>
<div class="t" style="right:204.4px;top:741.7px;font-size:13.33px;color:#000;text-align:right">0.00</div>
<div class="t" style="right:111.4px;top:741.7px;font-size:13.33px;color:#000;text-align:right">0.0</div>
<div class="t" style="right:18.4px;top:741.7px;font-size:13.33px;color:#000;text-align:right">0.00</div>
<div class="abs" style="left:49px;top:761px;width:16px;height:16px;background:#7a8ea8;border-radius:2px"></div>
<div class="abs" style="left:53px;top:768px;width:8px;height:2px;background:#fff"></div>
<div class="t" style="left:70px;top:762.7px;font-size:13.33px;color:#000">DE - PMax - Non-Brand</div>
<div class="t" style="left:321px;top:762.7px;font-size:13.33px;color:#000">Poster - Poster 1</div>
<div class="t" style="right:432.4px;top:762.7px;font-size:13.33px;color:#000;text-align:right">1661</div>
<div class="t" style="right:346.4px;top:762.7px;font-size:13.33px;color:#000;text-align:right">22</div>
<div class="t" style="right:275.4px;top:762.7px;font-size:13.33px;color:#000;text-align:right">0.56%</div>
<div class="t" style="right:204.4px;top:762.7px;font-size:13.33px;color:#000;text-align:right">3.50</div>
<div class="t" style="right:111.4px;top:762.7px;font-size:13.33px;color:#000;text-align:right">1.4</div>
<div class="t" style="right:18.4px;top:762.7px;font-size:13.33px;color:#000;text-align:right">1.35</div>
<div class="t" style="left:321px;top:783.7px;font-size:13.33px;color:#000">White Paper - Ultimate guide DE</div>
<div class="t" style="right:432.4px;top:783.7px;font-size:13.33px;color:#000;text-align:right">4046</div>
<div class="t" style="right:346.4px;top:783.7px;font-size:13.33px;color:#000;text-align:right">88</div>
<div class="t" style="right:275.4px;top:783.7px;font-size:13.33px;color:#000;text-align:right">0.65%</div>
<div class="t" style="right:204.4px;top:783.7px;font-size:13.33px;color:#000;text-align:right">13.09</div>
<div class="t" style="right:111.4px;top:783.7px;font-size:13.33px;color:#000;text-align:right">1.9</div>
<div class="t" style="right:18.4px;top:783.7px;font-size:13.33px;color:#000;text-align:right">1.90</div>
<div class="t" style="left:321px;top:804.7px;font-size:13.33px;color:#000">Whitepaper - Whitepaper 1</div>
<div class="t" style="right:432.4px;top:804.7px;font-size:13.33px;color:#000;text-align:right">116535</div>
<div class="t" style="right:346.4px;top:804.7px;font-size:13.33px;color:#000;text-align:right">2896</div>
<div class="t" style="right:275.4px;top:804.7px;font-size:13.33px;color:#000;text-align:right">1.44%</div>
<div class="t" style="right:204.4px;top:804.7px;font-size:13.33px;color:#000;text-align:right">575.17</div>
<div class="t" style="right:111.4px;top:804.7px;font-size:13.33px;color:#000;text-align:right">402.8</div>
<div class="t" style="right:18.4px;top:804.7px;font-size:13.33px;color:#000;text-align:right">399.79</div>
<div class="t" style="left:321px;top:825.7px;font-size:13.33px;color:#000">Whitepaper - Whitepaper 3</div>
<div class="t" style="right:432.4px;top:825.7px;font-size:13.33px;color:#000;text-align:right">151215</div>
<div class="t" style="right:346.4px;top:825.7px;font-size:13.33px;color:#000;text-align:right">2816</div>
<div class="t" style="right:275.4px;top:825.7px;font-size:13.33px;color:#000;text-align:right">1.25%</div>
<div class="t" style="right:204.4px;top:825.7px;font-size:13.33px;color:#000;text-align:right">250.71</div>
<div class="t" style="right:111.4px;top:825.7px;font-size:13.33px;color:#000;text-align:right">100.1</div>
<div class="t" style="right:18.4px;top:825.7px;font-size:13.33px;color:#000;text-align:right">94.07</div>
<div class="abs" style="left:49px;top:845px;width:16px;height:16px;background:#7a8ea8;border-radius:2px"></div>
<div class="abs" style="left:53px;top:852px;width:8px;height:2px;background:#fff"></div>
<div class="t" style="left:70px;top:846.7px;font-size:13.33px;color:#000">IT - PMax - Non-Brand</div>
<div class="t" style="left:321px;top:846.7px;font-size:13.33px;color:#000">White Paper - Ultimate guide IT</div>
<div class="t" style="right:432.4px;top:846.7px;font-size:13.33px;color:#000;text-align:right">116493</div>
<div class="t" style="right:346.4px;top:846.7px;font-size:13.33px;color:#000;text-align:right">3117</div>
<div class="t" style="right:275.4px;top:846.7px;font-size:13.33px;color:#000;text-align:right">1.44%</div>
<div class="t" style="right:204.4px;top:846.7px;font-size:13.33px;color:#000;text-align:right">213.81</div>
<div class="t" style="right:111.4px;top:846.7px;font-size:13.33px;color:#000;text-align:right">75.0</div>
<div class="t" style="right:18.4px;top:846.7px;font-size:13.33px;color:#000;text-align:right">1,001.00</div>
<div class="abs" style="left:49px;top:866px;width:16px;height:16px;background:#7a8ea8;border-radius:2px"></div>
<div class="abs" style="left:53px;top:873px;width:8px;height:2px;background:#fff"></div>
<div class="t" style="left:70px;top:867.7px;font-size:13.33px;color:#000">US - PMax - Non-Brand</div>
<div class="t" style="left:321px;top:867.7px;font-size:13.33px;color:#000">Poster - Poster 1</div>
<div class="t" style="right:432.4px;top:867.7px;font-size:13.33px;color:#000;text-align:right">1630</div>
<div class="t" style="right:346.4px;top:867.7px;font-size:13.33px;color:#000;text-align:right">238</div>
<div class="t" style="right:275.4px;top:867.7px;font-size:13.33px;color:#000;text-align:right">11.23%</div>
<div class="t" style="right:204.4px;top:867.7px;font-size:13.33px;color:#000;text-align:right">127.16</div>
<div class="t" style="right:111.4px;top:867.7px;font-size:13.33px;color:#000;text-align:right">2.8</div>
<div class="t" style="right:18.4px;top:867.7px;font-size:13.33px;color:#000;text-align:right">2.81</div>
<div class="t" style="left:321px;top:887.7px;font-size:13.33px;color:#000">White Paper - Ultimate guide EN</div>
<div class="t" style="right:432.4px;top:887.7px;font-size:13.33px;color:#000;text-align:right">8833</div>
<div class="t" style="right:346.4px;top:887.7px;font-size:13.33px;color:#000;text-align:right">125</div>
<div class="t" style="right:275.4px;top:887.7px;font-size:13.33px;color:#000;text-align:right">0.86%</div>
<div class="t" style="right:204.4px;top:887.7px;font-size:13.33px;color:#000;text-align:right">32.43</div>
<div class="t" style="right:111.4px;top:887.7px;font-size:13.33px;color:#000;text-align:right">2.2</div>
<div class="t" style="right:18.4px;top:887.7px;font-size:13.33px;color:#000;text-align:right">2.19</div>
<div class="t" style="left:321px;top:908.7px;font-size:13.33px;color:#000">Whitepaper - Whitepaper 2</div>
<div class="t" style="right:432.4px;top:908.7px;font-size:13.33px;color:#000;text-align:right">11103</div>
<div class="t" style="right:346.4px;top:908.7px;font-size:13.33px;color:#000;text-align:right">476</div>
<div class="t" style="right:275.4px;top:908.7px;font-size:13.33px;color:#000;text-align:right">5.35%</div>
<div class="t" style="right:204.4px;top:908.7px;font-size:13.33px;color:#000;text-align:right">201.29</div>
<div class="t" style="right:111.4px;top:908.7px;font-size:13.33px;color:#000;text-align:right">191.0</div>
<div class="t" style="right:18.4px;top:908.7px;font-size:13.33px;color:#000;text-align:right">2,189.00</div>
<svg style="left:784px;top:737px" width="6" height="6"><path d="M0 0H6V6Z" fill="#ea4335"/></svg>
<div class="t" style="right:432.4px;top:931.7px;font-size:13.33px;font-weight:bold;color:#000;text-align:right">411516</div>
<div class="t" style="right:346.4px;top:931.7px;font-size:13.33px;font-weight:bold;color:#000;text-align:right">9778</div>
<div class="t" style="right:275.4px;top:931.7px;font-size:13.33px;font-weight:bold;color:#000;text-align:right">2.96%</div>
<div class="t" style="right:204.4px;top:931.7px;font-size:13.33px;font-weight:bold;color:#000;text-align:right">1,417.16</div>
<div class="t" style="right:111.4px;top:931.7px;font-size:13.33px;font-weight:bold;color:#000;text-align:right">777.1</div>
<div class="t" style="right:18.4px;top:931.7px;font-size:13.33px;font-weight:bold;color:#000;text-align:right">3,692.11</div>
<div class="abs" style="left:0;top:959px;width:1062px;height:11px;background:#fff"></div>
<div class="abs" style="left:0;top:959px;width:45px;height:11px;background:#f8f9fa"></div>
<div class="abs" style="left:0;top:958px;width:1050px;height:1px;background:#e3e3e3"></div>
<div class="abs" style="left:45px;top:959px;width:1px;height:11px;background:#d9d9d9"></div>
<div class="abs" style="left:83px;top:960px;width:727px;height:8px;background:#dadce0;border-radius:4px"></div>
<div class="abs" style="left:1019px;top:959px;width:1px;height:11px;background:#e3e3e3"></div>
<div class="abs" style="left:1019px;top:959px;width:31px;height:11px;background:#f8f9fa"></div>
<div class="abs" style="left:1019px;top:959px;width:1px;height:11px;background:#e3e3e3"></div>
<div class="abs" style="left:1035px;top:959px;width:1px;height:11px;background:#e3e3e3"></div>
<div class="abs" style="left:1050px;top:959px;width:1px;height:11px;background:#e3e3e3"></div>
<svg style="left:1024px;top:961px" width="5" height="7"><path d="M4 0V7L0 3.5Z" fill="#9aa0a6"/></svg>
<svg style="left:1041px;top:961px" width="5" height="7"><path d="M0 0V7L4 3.5Z" fill="#9aa0a6"/></svg>
<div class="abs" style="left:1051px;top:926px;width:11px;height:33px;background:#f8f9fa;border-top:1px solid #e3e3e3"></div>
<div class="abs" style="left:1051px;top:942px;width:11px;height:1px;background:#e3e3e3"></div>
<svg style="left:1053px;top:930px" width="7" height="5"><path d="M0 4H7L3.5 0Z" fill="#9aa0a6"/></svg>
<svg style="left:1053px;top:948px" width="7" height="5"><path d="M0 0H7L3.5 4Z" fill="#9aa0a6"/></svg>
<div class="abs" style="left:0;top:970px;width:1062px;height:38px;background:#f9fbfd;border-top:1px solid #e3e3e3"></div>
<svg style="left:56px;top:985px" width="12" height="12"><path d="M6 0V12M0 6H12" stroke="#444746" stroke-width="1.8"/></svg>
<svg style="left:94px;top:985px" width="15" height="12"><path d="M0 1H15M0 6H15M0 11H15" stroke="#444746" stroke-width="1.8"/></svg>
<div class="abs" style="left:134px;top:971px;width:121px;height:37px;background:#e1e9f7"></div>
<div class="t" style="left:146px;top:983px;font-size:15px;font-weight:bold;color:#0b57d0">Dashboard</div>
<svg style="left:234px;top:989px" width="9" height="5"><path d="M0 0H9L4.5 4.5Z" fill="#0b57d0"/></svg>
<svg style="left:0;top:1002px" width="6" height="6"><path d="M0 0A6 6 0 0 0 6 6H0Z" fill="#8a8a8a"/></svg>
<svg style="left:1056px;top:1002px" width="6" height="6"><path d="M6 0A6 6 0 0 1 0 6H6Z" fill="#8a8a8a"/></svg>
<svg style="left:1029px;top:986px" width="8" height="12"><path d="M6.8 1L2 6L6.8 11" fill="none" stroke="#444746" stroke-width="2"/></svg>
<div class="abs" style="left:47px;top:936.5px;width:22px;height:22px;background:#fff;border-radius:9px;box-shadow:0 1px 3px rgba(0,0,0,.25)"></div>
<svg style="left:0;top:900px" width="100" height="100"><g transform="translate(57.8 47.2) rotate(-43)"><path d="M-8 0L-5.8 -2.2H6.4A1.2 1.2 0 0 1 7.6 -1V1A1.2 1.2 0 0 1 6.4 2.2H-5.8Z" fill="none" stroke="#188038" stroke-width="2" stroke-linejoin="round"/></g></svg>
</body></html>
